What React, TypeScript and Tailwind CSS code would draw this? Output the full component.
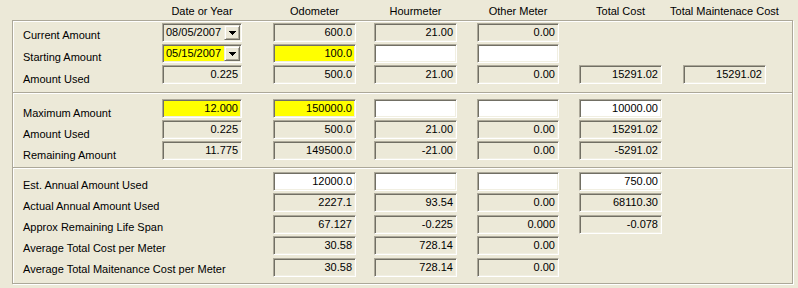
const COLS = [
  "w-[80px]",
  "ml-[31px] w-[83px]",
  "ml-[18px] w-[83px]",
  "ml-[20px] w-[82px]",
  "ml-[20px] w-[83px]",
  "ml-[21px] w-[83px]",
];

const HEADERS = ["Date or Year", "Odometer", "Hourmeter", "Other Meter", "Total Cost", "Total Maintenace Cost"];

// kind: r = read only, w = white edit, y = yellow required, - = nothing
type Cell = { v?: string; k: "r" | "w" | "y" | "-"; combo?: boolean };

const r = (v: string): Cell => ({ v, k: "r" });
const w = (v = ""): Cell => ({ v, k: "w" });
const y = (v = ""): Cell => ({ v, k: "y" });
const _: Cell = { k: "-" };

const GROUP1: Cell[][] = [
  [{ v: "08/05/2007", k: "r", combo: true }, r("600.0"), r("21.00"), r("0.00"), _, _],
  [{ v: "05/15/2007", k: "y", combo: true }, y("100.0"), w(), w(), _, _],
  [r("0.225"), r("500.0"), r("21.00"), r("0.00"), r("15291.02"), r("15291.02")],
];

const GROUP2: Cell[][] = [
  [y("12.000"), y("150000.0"), w(), w(), w("10000.00"), _],
  [r("0.225"), r("500.0"), r("21.00"), r("0.00"), r("15291.02"), _],
  [r("11.775"), r("149500.0"), r("-21.00"), r("0.00"), r("-5291.02"), _],
];

const GROUP3: Cell[][] = [
  [_, w("12000.0"), w(), w(), w("750.00"), _],
  [_, r("2227.1"), r("93.54"), r("0.00"), r("68110.30"), _],
  [_, r("67.127"), r("-0.225"), r("0.000"), r("-0.078"), _],
  [_, r("30.58"), r("728.14"), r("0.00"), _, _],
  [_, r("30.58"), r("728.14"), r("0.00"), _, _],
];

const BG = { r: "bg-[#ece9d8]", w: "bg-white", y: "bg-[#ffff00]", "-": "" };

function Arrow() {
  return (
    <svg width="7" height="4" viewBox="0 0 7 4" shapeRendering="crispEdges">
      <path d="M0 0h7v1H0z M1 1h5v1H1z M2 2h3v1H2z M3 3h1v1H3z" fill="#000" />
    </svg>
  );
}

function Field({ cell, col }: { cell: Cell; col: string }) {
  if (cell.k === "-") return <div className={`${col} h-[19px]`} />;
  const sunken =
    "h-[19px] flex items-center border border-t-[#aca899] border-l-[#aca899] border-b-white border-r-white shadow-[inset_1px_1px_0_#716f64,inset_-1px_-1px_0_#f1efe2]";
  if (cell.combo) {
    return (
      <div className={`${col} ${sunken} ${BG[cell.k]}`}>
        <span className="flex-1 pl-[3px] leading-[13px]">{cell.v}</span>
        <div className="mr-[1px] h-[15px] w-[16px] flex items-center justify-center bg-[#ece9d8] border border-t-[#f1efe2] border-l-[#f1efe2] border-b-[#716f64] border-r-[#716f64] shadow-[inset_1px_1px_0_#fff,inset_-1px_-1px_0_#aca899]">
          <Arrow />
        </div>
      </div>
    );
  }
  return (
    <div className={`${col} ${sunken} ${BG[cell.k]} justify-end pr-[3px]`}>
      <span className="leading-[13px]">{cell.v}</span>
    </div>
  );
}

function Row({ cells, className = "" }: { cells: Cell[]; className?: string }) {
  return (
    <div className={`flex ${className}`}>
      {cells.map((c, i) => (
        <Field key={i} cell={c} col={COLS[i]} />
      ))}
    </div>
  );
}

function Labels({ items, className }: { items: string[]; className: string }) {
  return (
    <div className={`w-[149px] pl-[10px] flex flex-col leading-[13px] whitespace-nowrap ${className}`}>
      {items.map((t) => (
        <div key={t}>{t}</div>
      ))}
    </div>
  );
}

function Separator() {
  return <div className="h-[2px] border-t border-t-[#aca899] border-b border-b-white" />;
}

export default function App() {
  return (
    <div className="w-[798px] h-[288px] bg-[#ece9d8] text-black text-[11px] font-['Liberation_Sans',Arial,sans-serif] overflow-hidden">
      {/* column headers */}
      <div className="h-[20px] pl-[162px] pt-[5px] flex leading-[13px]">
        {HEADERS.map((h, i) => (
          <div key={h} className={`${COLS[i]} flex justify-center whitespace-nowrap`}>
            {h}
          </div>
        ))}
      </div>

      {/* etched group box */}
      <div className="ml-[12px] w-[781px] h-[264px] border border-[#aca899] shadow-[inset_1px_1px_0_#fff,1px_1px_0_#fff] flex flex-col">
        <div className="h-[71px] flex">
          <Labels items={["Current Amount", "Starting Amount", "Amount Used"]} className="pt-[8px] gap-[9px]" />
          <div className="flex flex-col pt-[2px] gap-[2px]">
            {GROUP1.map((row, i) => (
              <Row key={i} cells={row} />
            ))}
          </div>
        </div>

        <Separator />

        <div className="h-[73px] flex">
          <Labels items={["Maximum Amount", "Amount Used", "Remaining Amount"]} className="pt-[13px] gap-[8px]" />
          <div className="flex flex-col pt-[5px] gap-[2px]">
            {GROUP2.map((row, i) => (
              <Row key={i} cells={row} />
            ))}
          </div>
        </div>

        <Separator />

        <div className="flex-1 flex">
          <Labels
            items={[
              "Est. Annual Amount Used",
              "Actual Annual Amount Used",
              "Approx Remaining Life Span",
              "Average Total Cost per Meter",
              "Average Total Maitenance Cost per Meter",
            ]}
            className="pt-[10px] gap-[8px]"
          />
          <div className="flex flex-col pt-[3px]">
            <Row cells={GROUP3[0]} />
            <Row cells={GROUP3[1]} className="mt-[2px]" />
            <Row cells={GROUP3[2]} className="mt-[3px]" />
            <Row cells={GROUP3[3]} className="mt-[2px]" />
            <Row cells={GROUP3[4]} className="mt-[3px]" />
          </div>
        </div>
      </div>
    </div>
  );
}
